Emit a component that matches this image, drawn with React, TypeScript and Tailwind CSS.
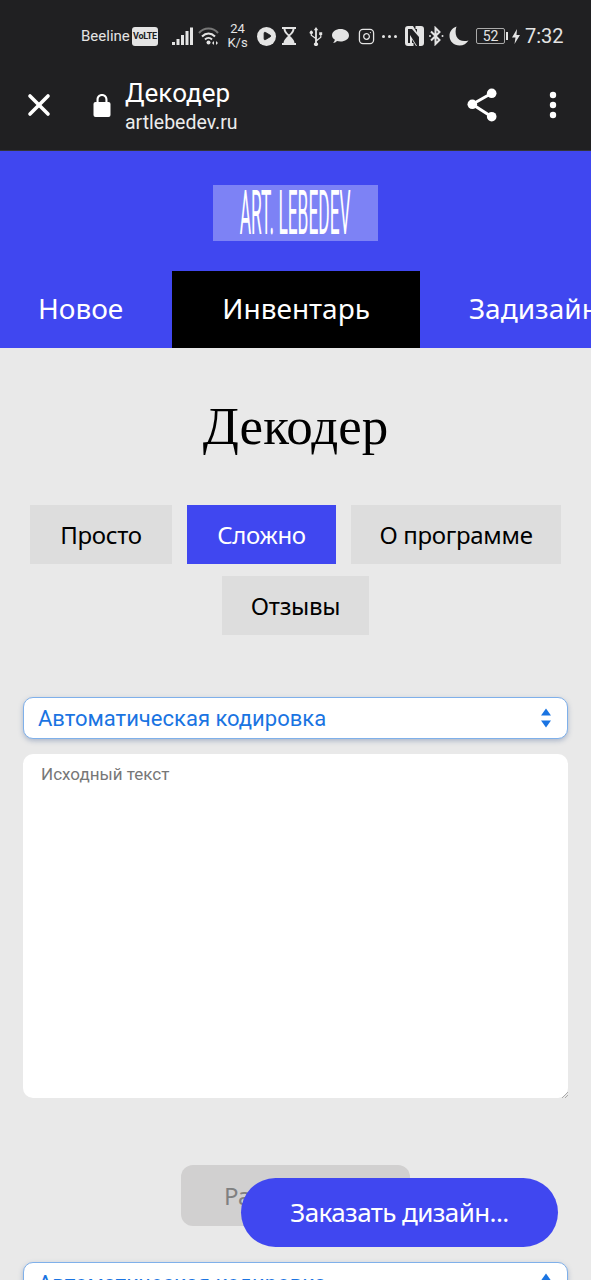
import React from 'react';
import { X, Instagram, Play } from 'lucide-react';

const TOP_TABS = [
  { label: 'Просто', width: 'w-[142px]' },
  { label: 'Сложно', width: 'w-[149px]' },
  { label: 'О программе', width: 'w-[210px]' },
  { label: 'Отзывы', width: 'w-[147px]' },
];

const SelectBox = () => (
  <div className="h-[42px] shrink-0 flex items-center justify-between pl-[14px] pr-[15px] bg-white rounded-[10px] border border-[#7fb0ea] shadow-[0_2px_5px_rgba(60,90,140,0.35)]">
    <span className="text-[22px] text-[#1a74e2] font-['Roboto',sans-serif]">Автоматическая кодировка</span>
    <svg width="12" height="20" viewBox="0 0 12 20">
      <path d="M6 0.5 L11 7.5 L1 7.5 Z" fill="#1a74e2" />
      <path d="M6 19.5 L11 12.5 L1 12.5 Z" fill="#1a74e2" />
    </svg>
  </div>
);

const StatusBar = () => (
  <div className="h-[72px] flex items-center pl-[81px] text-[#e4e4e4] font-['Roboto',sans-serif]">
    <span className="text-[15px] w-[51px]">Beeline</span>
    <span className="w-[26px] h-[19px] bg-[#e4e4e4] rounded-[3px] text-[#202022] text-[9px] font-bold leading-[19px] text-center tracking-[-0.3px]">VoLTE</span>
    <svg className="ml-[14px]" width="21" height="19" viewBox="0 0 21 19" fill="#e4e4e4">
      <rect x="0" y="15" width="3" height="3" />
      <rect x="4.5" y="12" width="3" height="6" />
      <rect x="9" y="8" width="3" height="10" />
      <rect x="13.5" y="4" width="3" height="14" />
      <rect x="18" y="0.5" width="3" height="17.5" />
    </svg>
    <svg className="ml-[5px]" width="22" height="18" viewBox="0 0 22 18" fill="none">
      <path d="M1 6 C6 0 15 0 20 6" stroke="#777" strokeWidth="2" />
      <path d="M4 9.5 C8 5.5 13 5.5 17 9.5" stroke="#e4e4e4" strokeWidth="2" />
      <path d="M7 12.5 C9 10.5 12 10.5 14 12.5" stroke="#e4e4e4" strokeWidth="2" />
      <circle cx="10.5" cy="15.5" r="2" fill="#e4e4e4" />
      <path d="M16 14 L16 18 L14 16 Z M18 14 L18 18 L20 16 Z" fill="#e4e4e4" />
    </svg>
    <div className="ml-[6px] w-[23px] flex flex-col items-center text-[13px] leading-[14px]">
      <span>24</span>
      <span>K/s</span>
    </div>
    <span className="ml-[8px] w-[19px] h-[19px] rounded-full bg-[#e4e4e4] flex items-center justify-center">
      <Play size={10} className="text-[#202022] fill-[#202022] ml-[1px]" />
    </span>
    <svg className="ml-[6px]" width="14" height="18" viewBox="0 0 14 18" fill="#e4e4e4">
      <path d="M0 0 H14 V2 H12.5 C12.5 5 10 7 8 9 C10 11 12.5 13 12.5 16 H14 V18 H0 V16 H1.5 C1.5 13 4 11 6 9 C4 7 1.5 5 1.5 2 H0 Z M3.5 2 C3.6 4 5 5.8 7 7.6 C9 5.8 10.4 4 10.5 2 Z" fillRule="evenodd" />
      <path d="M3 15.5 C4 13.5 5.5 12.5 7 11.5 C8.5 12.5 10 13.5 11 15.5 Z" />
    </svg>
    <svg className="ml-[13px]" width="14" height="19" viewBox="0 0 14 19" fill="#e4e4e4">
      <path d="M7 0 L9.2 3.2 H7.9 V12.6 L11.2 10 V8 H10.2 V5.2 H13.2 V8 H12.4 V10.6 L7.9 14.2 V15.4 A2 2 0 1 1 6.1 15.4 V11.8 L1.7 8.6 V6.9 A1.6 1.6 0 1 1 2.9 6.9 V8 L6.1 10.3 V3.2 H4.8 Z" />
    </svg>
    <svg className="ml-[9px]" width="17" height="16" viewBox="0 0 17 16" fill="#e4e4e4">
      <path d="M8.5 1 C13 1 17 3.5 17 7.5 C17 11 13 13.5 8.5 13.5 C7 13.5 6 13.3 5 13 C4 14 2.5 15 1 15 C2 14 2.8 12.8 2.8 11.5 C1 10.5 0 9 0 7.5 C0 3.5 4 1 8.5 1 Z" />
    </svg>
    <Instagram className="ml-[9px]" size={17} strokeWidth={1.8} />
    <span className="ml-[7px] w-[15px] flex justify-between">
      <i className="w-[3px] h-[3px] rounded-full bg-[#e4e4e4]" />
      <i className="w-[3px] h-[3px] rounded-full bg-[#e4e4e4]" />
      <i className="w-[3px] h-[3px] rounded-full bg-[#e4e4e4]" />
    </span>
    <svg className="ml-[8px]" width="19" height="20" viewBox="0 0 19 20" fill="#e4e4e4">
      <path d="M3 0 H8 L12 6.5 V3 H10.5 V0 H16 A3 3 0 0 1 19 3 V17 A3 3 0 0 1 16 20 H11 L7 13.5 V17 H8.5 V20 H3 A3 3 0 0 1 0 17 V3 A3 3 0 0 1 3 0 Z M3 3 V17 H5 V9 L12 20 H14 V3 H14 V11 L7 3 Z" fillRule="evenodd" />
    </svg>
    <svg className="ml-[5px]" width="15" height="20" viewBox="0 0 15 20" fill="none" stroke="#e4e4e4" strokeWidth="2">
      <path d="M2 5.5 L10.5 14 L6.5 18 V2 L10.5 6 L2 14.5" />
      <circle cx="13.5" cy="10" r="1" fill="#e4e4e4" stroke="none" />
      <circle cx="1" cy="10" r="1" fill="#e4e4e4" stroke="none" />
    </svg>
    <svg className="ml-[5px]" width="20" height="20" viewBox="0 0 20 20" fill="#e4e4e4">
      <path d="M7.5 0.5 C3 2 0.5 5.5 0.5 10 C0.5 15.5 5 19.5 10.5 19.5 C14.5 19.5 17.5 17.5 19.5 14.5 C14 16 9.5 14.5 7.5 10.5 C6.3 7.5 6.3 3.8 7.5 0.5 Z" />
    </svg>
    <div className="ml-[7px] w-[29px] h-[16px] border border-[#aaa] rounded-[2px] text-[14px] leading-[14px] text-center">52</div>
    <i className="ml-[1px] w-[2px] h-[8px] bg-[#e4e4e4]" />
    <svg className="ml-[4px]" width="8" height="15" viewBox="0 0 8 15" fill="#e4e4e4">
      <path d="M5 0 L0 8.5 H3.5 L2.5 15 L8 6 H4.5 Z" />
    </svg>
    <span className="ml-[5px] text-[20px]">7:32</span>
  </div>
);

const Toolbar = () => (
  <div className="h-[79px] pb-[13px] flex items-center text-white font-['Roboto',sans-serif] border-b border-[#33343a]">
    <X className="ml-[21px]" size={36} strokeWidth={2.4} />
    <svg className="ml-[36px]" width="18" height="24" viewBox="0 0 18 24" fill="white">
      <path d="M3.5 10 V6.5 C3.5 3.2 6 1 9 1 C12 1 14.5 3.2 14.5 6.5 V10 H12.4 V6.5 C12.4 4.4 11 3 9 3 C7 3 5.6 4.4 5.6 6.5 V10 Z" />
      <rect x="0.5" y="9" width="17" height="15" rx="2" />
    </svg>
    <div className="ml-[14px] flex flex-col mt-[4px]">
      <span className="text-[26px] leading-[32px]">Декодер</span>
      <span className="text-[19.5px] leading-[27px] text-[#ececec]">artlebedev.ru</span>
    </div>
    <div className="ml-auto mr-[33px] flex items-center gap-[51px]">
      <svg width="30" height="34" viewBox="0 0 30 34" fill="white">
        <circle cx="24.7" cy="5.3" r="4.8" />
        <circle cx="5.3" cy="16.3" r="4.8" />
        <circle cx="24.7" cy="28.7" r="4.8" />
        <path d="M24.7 5.3 L5.3 16.3 L24.7 28.7" stroke="white" strokeWidth="3" fill="none" />
      </svg>
      <svg width="10" height="28" viewBox="0 0 10 28" fill="white">
        <circle cx="5" cy="4" r="3.2" />
        <circle cx="5" cy="14" r="3.2" />
        <circle cx="5" cy="24" r="3.2" />
      </svg>
    </div>
  </div>
);

const SiteHeader = () => (
  <div className="h-[197px] bg-[#4047f0] overflow-hidden flex flex-col font-['Noto_Sans',sans-serif] text-white">
    <div className="mt-[34px] mx-auto w-[165px] h-[56px] bg-[#7d82f5] flex items-center justify-center">
      <span className="shrink-0 font-['Roboto',sans-serif] font-normal text-[62px] leading-none whitespace-nowrap scale-x-[0.28]">ART. LEBEDEV</span>
    </div>
    <div className="mt-[30px] flex h-[77px] whitespace-nowrap text-[28px] leading-[75px]">
      <span className="pl-[38px] pr-[49px]">Новое</span>
      <span className="px-[50px] bg-black">Инвентарь</span>
      <span className="pl-[49px]">Задизайнено</span>
    </div>
  </div>
);

export default function App() {
  return (
    <div className="relative w-[591px] h-[1280px] overflow-hidden bg-[#e9e9e9]">
      <div className="bg-[#202022]">
        <StatusBar />
        <Toolbar />
      </div>
      <SiteHeader />

      <main className="flex flex-col">
        <h1 className="mt-[46px] text-center font-['Liberation_Serif',serif] text-[53px] leading-[64px] text-black">Декодер</h1>

        <div className="mt-[47px] px-[20px] flex flex-wrap justify-center gap-x-[15px] gap-y-[12px] font-['Noto_Sans',sans-serif] text-[24px] leading-[59px] tracking-[-0.3px]">
          {TOP_TABS.map((tab) => (
            <span key={tab.label} className={`${tab.width} text-center ${tab.label === 'Сложно' ? 'bg-[#4047f0] text-white' : 'bg-[#dddddd] text-black'}`}>
              {tab.label}
            </span>
          ))}
        </div>

        <div className="mt-[62px] mx-[23px] flex flex-col">
          <SelectBox />
          <div className="relative mt-[15px] h-[344px] bg-white rounded-[10px] px-[18px] py-[8px] text-[17px] text-[#777] font-['Roboto',sans-serif]">
            Исходный текст
            <svg className="absolute right-0 bottom-0" width="6" height="6" viewBox="0 0 6 6" stroke="#999" strokeWidth="0.8">
              <path d="M0 6 L6 0 M3 6 L6 3" />
            </svg>
          </div>
        </div>

        <div className="mt-[67px] mx-auto w-[229px] h-[61px] bg-[#d1d0d0] rounded-[12px] flex items-center pl-[43px] overflow-hidden whitespace-nowrap font-['Noto_Sans',sans-serif] text-[24px] text-[#808080]">
          Раскодировать
        </div>

        <div className="mt-[36px] mx-[23px] flex flex-col">
          <SelectBox />
        </div>
      </main>

      <div className="absolute left-[241px] top-[1178px] w-[317px] h-[69px] rounded-full bg-[#4047f0] flex items-center justify-center font-['Noto_Sans',sans-serif] text-[26px] tracking-[-0.6px] text-white">
        Заказать дизайн...
      </div>
    </div>
  );
}
